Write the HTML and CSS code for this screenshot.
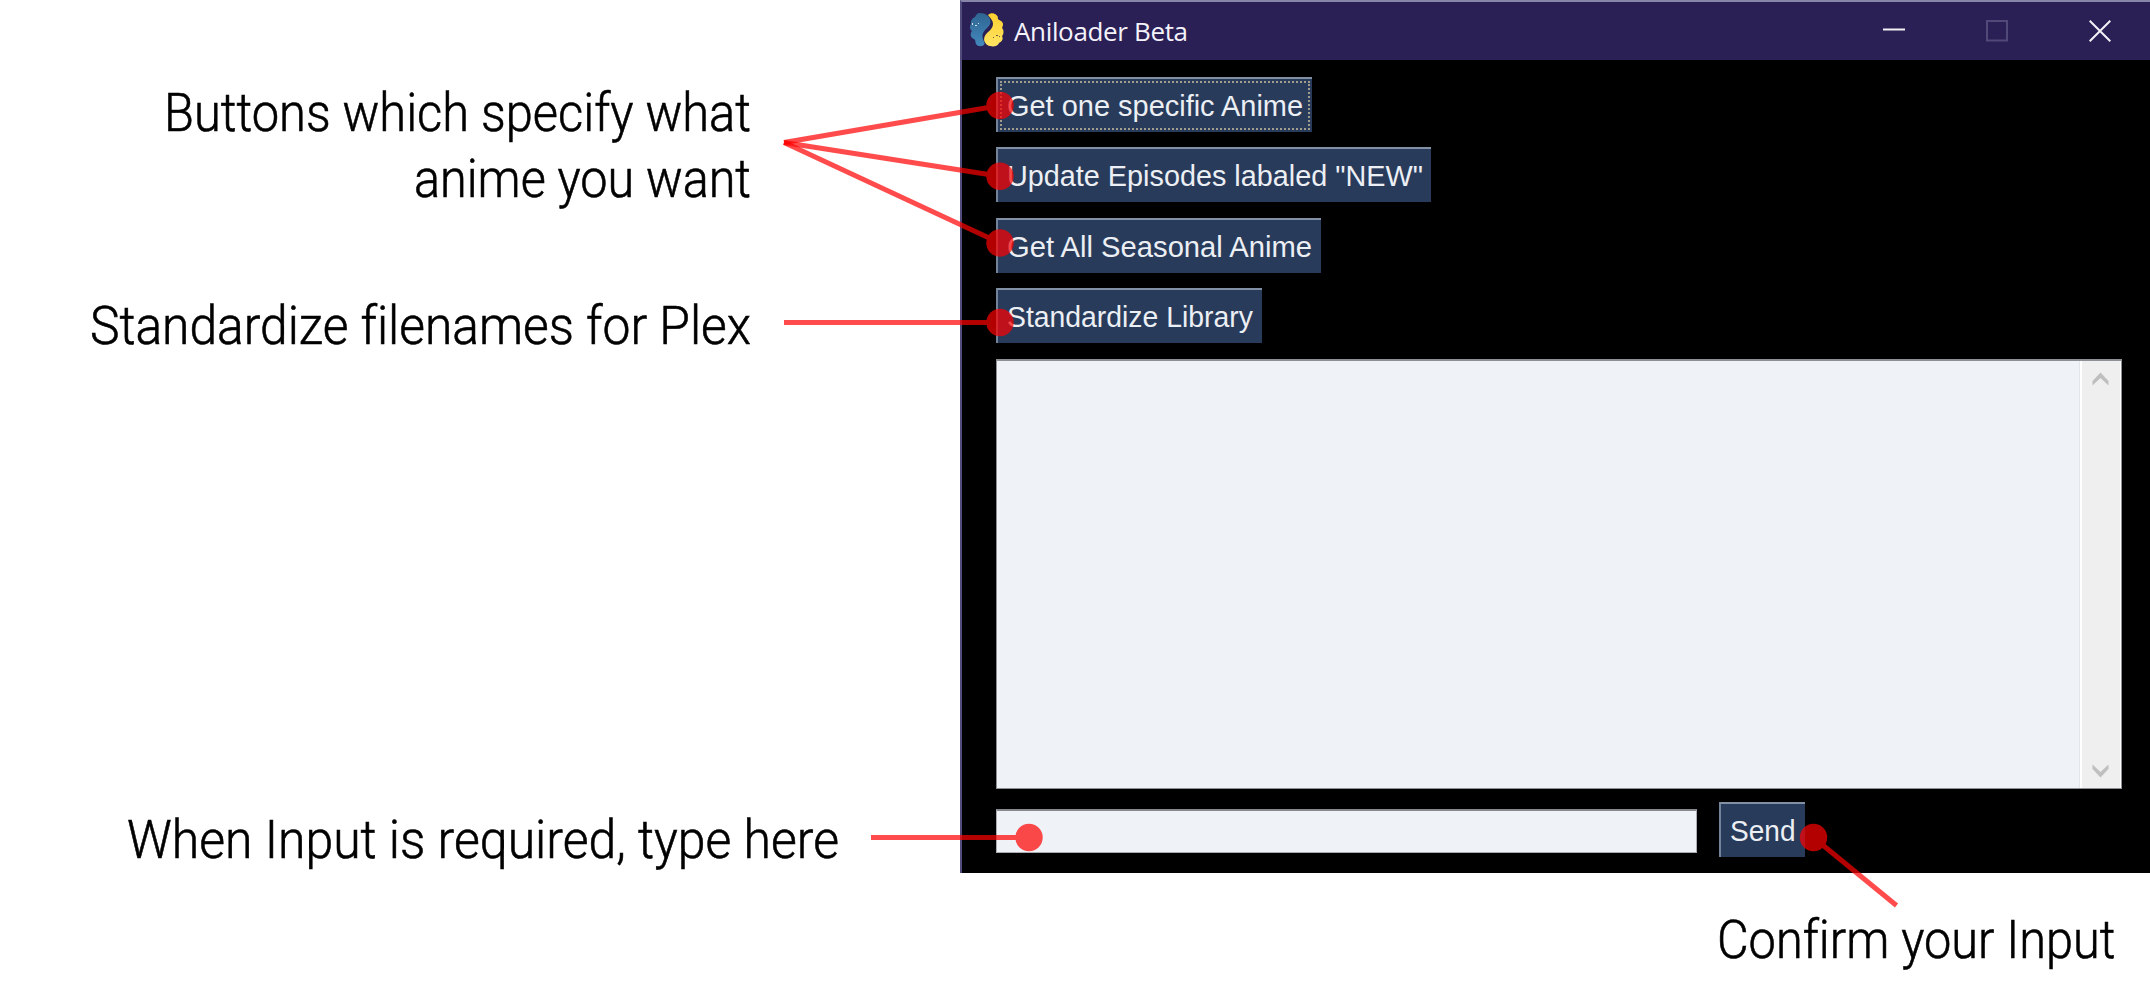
FILE: index.html
```html
<!DOCTYPE html>
<html lang="en">
<head>
<meta charset="utf-8">
<title>Aniloader Beta</title>
<link rel="stylesheet" href="styles.css">
</head>
<body>
<main class="guide">
  <section class="window">
    <header class="titlebar">
      <svg class="logo" viewBox="0 0 34 34">
        <defs>
          <linearGradient id="blue" x1="0" y1="0" x2="0" y2="1"><stop offset="0" stop-color="#2f6592"/><stop offset="1" stop-color="#4389bd"/></linearGradient>
          <linearGradient id="gold" x1="0" y1="0" x2="0" y2="1"><stop offset="0" stop-color="#ffd02f"/><stop offset="1" stop-color="#ffe464"/></linearGradient>
        </defs>
        <path fill="url(#blue)" d="M10 0C15 0 20.500 3 20.500 9C20.500 14 13.500 16 12.500 22C12 27 15 29 14.500 31C13 34 8 34 6 31C5 29 6 27 4 26C0 25 0 20 2 18C-1 16 0 12 1 11C0 7 3 5 5 4C6 2 7 0 10 0Z"/>
        <path fill="url(#gold)" d="M18 2C21-1 26 0 28 4C27 6 29 7 31 8C34 10 33 13 32 15C34 17 34 21 32 23C34 27 31 29 29 30C28 33 24 34 20 33C16 32 13 28 14.500 24C16 19 23 17 23 11C23 7 20 5 18 2Z"/>
        <path fill="#d5dfe9" d="M2 10h1v2H2zM5 12h2v1H5zM8 10h1v1H8z"/>
        <path fill="#6b5a45" d="M23 24h1v1h-1zM26 22h2v1h-2zM29 23h1v1h-1z"/>
      </svg>
      <h1 class="title">Aniloader Beta</h1>
      <div class="controls">
        <svg viewBox="0 0 22 22"><path class="glyph" d="M0 9.5H22"/></svg>
        <svg viewBox="0 0 22 22"><path class="glyph off" d="M1 1H21V20.5H1Z"/></svg>
        <svg viewBox="0 0 22 22"><path class="glyph" d="M.7 .7L21.3 21.3M21.3 .7L.7 21.3"/></svg>
      </div>
    </header>
    <div class="content">
      <div class="actions">
        <button class="btn one focused"><span>Get one specific Anime</span></button>
        <button class="btn two"><span>Update Episodes labaled "NEW"</span></button>
        <button class="btn three"><span>Get All Seasonal Anime</span></button>
        <button class="btn four"><span>Standardize Library</span></button>
      </div>
      <div class="output">
        <div class="log"></div>
        <div class="scrollbar">
          <svg viewBox="0 0 17 14"><path d="M.5 9L8.5 .5L16.5 9V13.5L8.5 6L.5 13.5Z"/></svg>
          <svg viewBox="0 0 17 14"><path d="M.5 5L8.5 13.5L16.5 5V.5L8.5 8L.5 .5Z"/></svg>
        </div>
      </div>
      <div class="entry">
        <div class="field"></div>
        <button class="btn send"><span>Send</span></button>
      </div>
    </div>
  </section>

  <svg class="notes" viewBox="0 0 2150 1003">
    <g class="label">
      <text x="751" y="131" textLength="587" lengthAdjust="spacingAndGlyphs">Buttons which specify what</text>
      <text x="751" y="197" textLength="337" lengthAdjust="spacingAndGlyphs">anime you want</text>
      <text x="751" y="344" textLength="661" lengthAdjust="spacingAndGlyphs">Standardize filenames for Plex</text>
      <text x="839" y="858" textLength="712" lengthAdjust="spacingAndGlyphs">When Input is required, type here</text>
      <text x="2115.500" y="958" textLength="398.500" lengthAdjust="spacingAndGlyphs">Confirm your Input</text>
    </g>
    <g class="pin"><path d="M784 142.5L1000 105.5"/><circle cx="1000" cy="105.5" r="13.7"/></g>
    <g class="pin"><path d="M784 142.5L1000 176.3"/><circle cx="1000" cy="176.3" r="13.7"/></g>
    <g class="pin"><path d="M784 142.5L1000 243"/><circle cx="1000" cy="243" r="13.7"/></g>
    <g class="pin"><path d="M784 322.5H1000"/><circle cx="1000" cy="322.5" r="13.7"/></g>
    <g class="pin"><path d="M871 837.5H1029"/><circle cx="1029" cy="837.5" r="13.7"/></g>
    <g class="pin"><path d="M1896.5 905.5L1813.5 837.5"/><circle cx="1813.5" cy="837.5" r="13.7"/></g>
  </svg>
</main>
</body>
</html>
```
FILE: styles.css
```css
* { box-sizing: border-box; }
body { margin: 0; background: #fff; }
.guide { position: relative; height: 1003px; overflow: hidden; }

.window {
  display: flex;
  flex-direction: column;
  height: 873px;
  margin-left: 960px;
  border-top: 2px solid #8886a8;
  border-left: 2px solid #514c7c;
  background: #000;
}
.titlebar {
  display: flex;
  align-items: center;
  height: 58px;
  padding: 0 39.5px 0 8px;
  background: #2a2055;
}
.logo { width: 34px; height: 34px; margin-top: -2px; }
.title {
  margin: 0 0 0 10px;
  font: 400 26px/34px "Open Sans", "Noto Sans", sans-serif;
  letter-spacing: -.35px;
  color: #f4f2fa;
}
.controls { display: flex; gap: 81px; margin-left: auto; }
.controls svg { width: 22px; height: 22px; }
.glyph { fill: none; stroke: #f2f1f6; stroke-width: 2; }
.glyph.off { stroke: #514977; }

.content {
  flex: 1;
  display: flex;
  flex-direction: column;
  padding: 17px 28px 16px 33.5px;
}
.actions {
  display: flex;
  flex-direction: column;
  align-items: flex-start;
  gap: 15.3px;
}
.btn {
  position: relative;
  height: 55px;
  padding: 1px 0 0 9px;
  border: 0;
  border-top: 2px solid #8190a5;
  border-left: 2px solid #73839a;
  border-radius: 0;
  background: #283b5b;
  font: 400 30px/52px "Liberation Sans", Arial, sans-serif;
  color: #eceff4;
  text-align: left;
  white-space: nowrap;
}
.btn span { display: inline-block; transform-origin: 0 50%; }
.one { width: 316.5px; }
.one span { transform: scaleX(.965); }
.two { width: 435.5px; }
.two span { transform: scaleX(.96); }
.three { width: 325.5px; }
.three span { transform: scaleX(.973); }
.four { width: 266px; }
.four span { transform: scaleX(.945); }
.focused::after {
  content: "";
  position: absolute;
  inset: 2px;
  border: 2px dotted #a39d8f;
}

.output {
  display: flex;
  height: 430px;
  margin-top: 15.7px;
  border: 1px solid #8c8f93;
  border-top-width: 2px;
}
.log { flex: 1; background: #eff3f8; border-right: 1px solid #e3e6ea; }
.scrollbar {
  display: flex;
  flex-direction: column;
  align-items: center;
  justify-content: space-between;
  width: 41px;
  padding: 11px 0 10px;
  border: solid #fff;
  border-width: 0 1px 0 2px;
  background: #efefef;
}
.scrollbar svg { width: 17px; height: 14px; margin-right: 1px; fill: #bfbfbf; }

.entry { display: flex; align-items: center; gap: 22px; margin-top: 13px; }
.field {
  width: 701px;
  height: 44px;
  margin-top: 3px;
  border: 1px solid #a9adb2;
  border-top: 2px solid #85888d;
  background: #eff3f8;
}
.send { width: 86px; }
.send span { transform: scaleX(.935); }

.notes { position: absolute; inset: 0; width: 2150px; height: 1003px; }
.label text {
  font: 300 54px Roboto, sans-serif;
  font-variant-ligatures: none;
  text-anchor: end;
  fill: #000;
  stroke: #000;
  stroke-width: .6;
}
.pin { fill: #f00; stroke: none; opacity: .7; }
.pin path { stroke: #f00; stroke-width: 5; }
```
